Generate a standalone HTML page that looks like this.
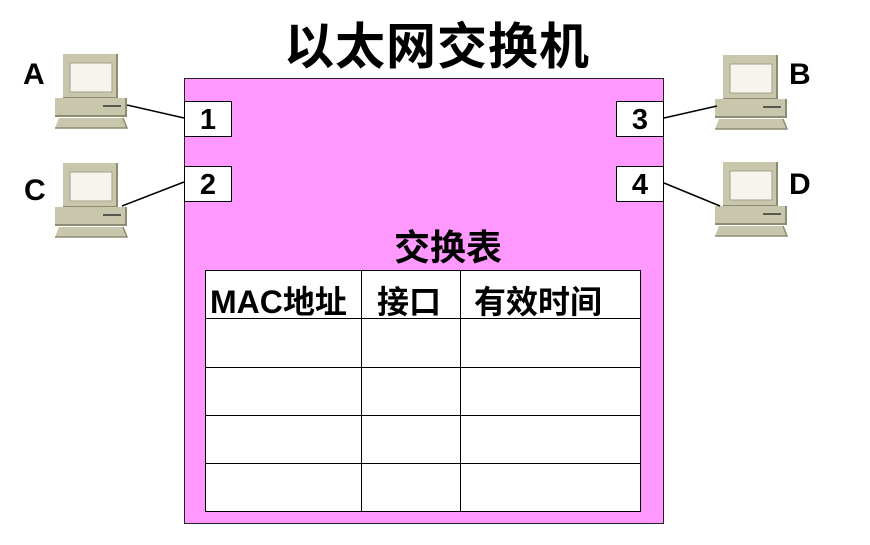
<!DOCTYPE html>
<html><head><meta charset="utf-8"><style>
body{margin:0;width:870px;height:545px;background:#fff;position:relative;overflow:hidden;font-family:"Liberation Sans","Noto Sans CJK SC",sans-serif;font-weight:bold}
.abs{position:absolute}
.title{left:0;width:874px;top:16px;text-align:center;font-size:50px;line-height:62px;letter-spacing:1px}
.box{left:184px;top:78px;width:478px;height:444px;background:#ff99ff;border:1px solid #222}
.port{width:46px;height:34px;background:#fff;border:1px solid #000;font-size:29px;text-align:center;line-height:36px}
.lbl{font-size:30px;line-height:30px}
.cell{position:absolute;background:#fff}
.h{position:absolute;font-size:32px;line-height:40px;white-space:nowrap}
</style></head><body>
<div class="abs title">以太网交换机</div>
<div class="abs box"></div>
<div class="abs port" style="left:184px;top:101px">1</div>
<div class="abs port" style="left:184px;top:166px">2</div>
<div class="abs port" style="left:616px;top:101px">3</div>
<div class="abs port" style="left:616px;top:166px">4</div>
<div class="abs" style="left:0;width:896px;top:226px;text-align:center;font-size:36px;line-height:44px">交换表</div>
<svg class="abs" style="left:0;top:0" width="870" height="545">
<rect x="205.5" y="270.5" width="435" height="241" fill="#fff" stroke="#000"/>
<g stroke="#000">
<line x1="205" y1="318.5" x2="641" y2="318.5"/>
<line x1="205" y1="367.5" x2="641" y2="367.5"/>
<line x1="205" y1="415.5" x2="641" y2="415.5"/>
<line x1="205" y1="463.5" x2="641" y2="463.5"/>
<line x1="361.5" y1="270" x2="361.5" y2="512"/>
<line x1="460.5" y1="270" x2="460.5" y2="512"/>
</g>
</svg>
<div class="h" style="left:210px;top:282px">MAC地址</div>
<div class="h" style="left:377px;top:282px">接口</div>
<div class="h" style="left:474px;top:282px">有效时间</div>
<div class="abs lbl" style="left:23px;top:60px">A</div>
<div class="abs lbl" style="left:24px;top:176px">C</div>
<div class="abs lbl" style="left:789px;top:60px">B</div>
<div class="abs lbl" style="left:789px;top:170px">D</div>
<svg class="abs" style="left:0;top:0" width="870" height="545">
<defs><g id="pc">
<rect x="8" y="0" width="54" height="44" fill="#c9c7ab"/>
<path d="M62 0V44H8" fill="none" stroke="#8d8b72" stroke-width="2"/>
<rect x="15" y="9" width="42" height="29" fill="#f5f5ee" stroke="#a3a188"/>
<rect x="0" y="44" width="71" height="18" fill="#c9c7ab"/>
<path d="M71 44V62H0" fill="none" stroke="#8d8b72" stroke-width="2"/>
<line x1="48" y1="52" x2="66" y2="52" stroke="#333" stroke-width="1.5"/>
<polygon points="4,64 68,64 72,74 0,74" fill="#c9c7ab"/>
<path d="M68 64 72 74H0" fill="none" stroke="#8d8b72" stroke-width="1.5"/>
</g></defs>
<use href="#pc" x="55" y="54"/>
<use href="#pc" x="55" y="163"/>
<use href="#pc" x="715" y="55"/>
<use href="#pc" x="715" y="162"/>
<g stroke="#000" stroke-width="1.5">
<line x1="127" y1="105" x2="184" y2="118"/>
<line x1="122" y1="206" x2="184" y2="182"/>
<line x1="664" y1="118" x2="717" y2="106"/>
<line x1="664" y1="183" x2="720" y2="206"/>
</g>
</svg>
</body></html>
